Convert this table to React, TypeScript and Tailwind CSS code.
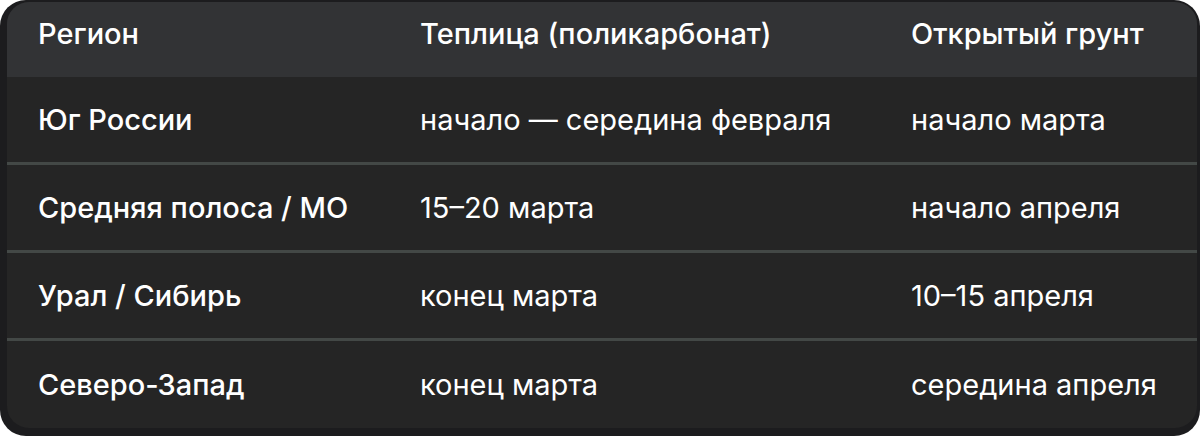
const rows = [
  { region: "Юг России", greenhouse: "начало — середина февраля", open: "начало марта" },
  { region: "Средняя полоса / МО", greenhouse: "15–20 марта", open: "начало апреля" },
  { region: "Урал / Сибирь", greenhouse: "конец марта", open: "10–15 апреля" },
  { region: "Северо-Запад", greenhouse: "конец марта", open: "середина апреля" },
]

export default function App() {
  return (
    <div className="h-[436px] w-[1200px] bg-white" style={{ fontFamily: "Inter, 'Noto Sans', sans-serif" }}>
      <div className="h-full rounded-[26px] bg-[#1c1c1e] pb-[8px] pl-[7px] pr-[3px] pt-[2px]">
        <div className="flex h-full flex-col overflow-hidden rounded-[22px] bg-[#252525] text-[29px] text-white">
          <div className="grid h-[75px] shrink-0 grid-cols-[382px_491px_1fr] items-center bg-[#323335] pb-[12px] pl-[31px] font-medium">
            <div>Регион</div>
            <div>Теплица (поликарбонат)</div>
            <div>Открытый грунт</div>
          </div>
          {rows.map((r, i) => (
            <div
              key={r.region}
              className={
                i < rows.length - 1
                  ? "grid h-[88px] shrink-0 grid-cols-[382px_491px_1fr] items-center border-b-[3px] border-[#434846] pl-[31px]"
                  : "grid flex-1 grid-cols-[382px_491px_1fr] items-center pl-[31px]"
              }
            >
              <div className="font-medium">{r.region}</div>
              <div>{r.greenhouse}</div>
              <div>{r.open}</div>
            </div>
          ))}
        </div>
      </div>
    </div>
  )
}
